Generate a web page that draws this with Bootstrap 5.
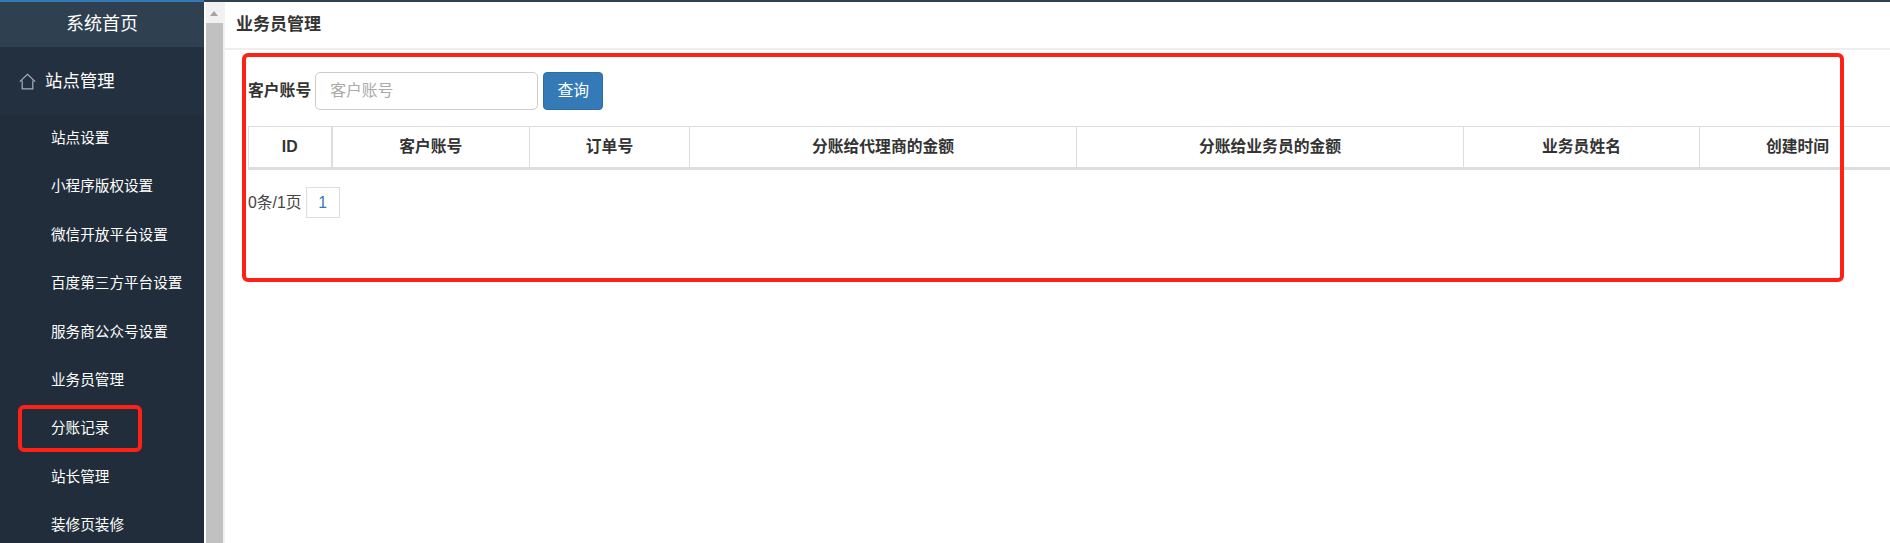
<!doctype html>
<html lang="zh">
<head>
<meta charset="utf-8">
<title>分账记录</title>
<link href="https://cdn.jsdelivr.net/npm/bootstrap@5.3.2/dist/css/bootstrap.min.css" rel="stylesheet">
<style>
  html, body { height: 543px; overflow: hidden; }
  body { font-family: "Liberation Sans", "Noto Sans CJK SC", sans-serif; color: #333; background: #fff; }
  .top-line { height: 2px; background: #2f4050; }
  .top-line span { display: block; width: 204px; height: 2px; background: #337ab7; }
  .page-wrap { height: 541px; }

  /* sidebar */
  .side-menu { width: 204px; background: #212d3a; overflow: hidden; flex: none; }
  .side-home { height: 45px; line-height: 45px; text-align: center; font-size: 18px; color: #fff; background: #2f4050; }
  .side-group { height: 67px; padding-left: 19px; padding-top: 2px; font-size: 17.4px; color: #fff; background: #233040; gap: 9px; }
  .side-group svg { width: 17px; height: 17px; }
  .side-list a { display: block; height: 48.4px; line-height: 48.4px; padding-left: 51px; font-size: 14.6px; color: #fff; text-decoration: none; white-space: nowrap; }

  /* scrollbar */
  .fake-scroll { width: 21px; flex: none; background: #f1f1f1; border-left: 2px solid #fff; border-right: 2px solid #f1f1f1; }
  .fake-scroll i { display: block; height: 21px; position: relative; }
  .fake-scroll i::before { content: ""; position: absolute; left: 4px; top: 9px; border: 4.5px solid transparent; border-top: 0; border-bottom: 5px solid #a3a3a3; }
  .fake-scroll b { display: block; height: 520px; background: #c1c1c1; }

  /* main */
  .main-pane { min-width: 0; flex: 1; overflow: hidden; }
  .pane-title { height: 48px; line-height: 46px; padding-left: 11px; font-size: 17px; font-weight: 700; border-bottom: 2px solid #eee; }
  .pane-body { padding: 22px 0 0 23px; width: 1671px; }
  .search-label { font-size: 15.8px; font-weight: 700; margin: 0 4px 0 0; white-space: nowrap; }
  .search-input { width: 223px; height: 38px; font-size: 15.8px; padding: 6px 14px; border: 1px solid #ccc; border-radius: 5px; color: #555; }
  .search-input::placeholder { color: #aaa; }
  .search-btn { height: 38px; width: 60px; margin-left: 5px; padding: 0; font-size: 15.8px; color: #fff; background: #337ab7; border: 1px solid #2e6da4; border-radius: 4px; }
  .record-table { width: 1648px; margin: 16px 0 0; table-layout: fixed; border-collapse: collapse; }
  .record-table th { height: 42px; padding: 0; font-size: 15.8px; font-weight: 700; text-align: center; color: #333; border: 1px solid #ddd; border-bottom: 3px solid #ddd; vertical-align: middle; }
  .record-table th.id-col { border-right-width: 2px; }
  .pager-row { margin-top: 17px; font-size: 15.8px; color: #444; }
  .pager-num { width: 34px; height: 31px; line-height: 29px; margin-left: 4px; text-align: center; color: #337ab7; border: 1px solid #ddd; }

  /* red markup drawn on top of the screenshot */
  .mark-box { position: absolute; border: 4px solid #ff2016; border-radius: 6px; pointer-events: none; }
  .mark-side { left: 18px; top: 405px; width: 124px; height: 47px; }
  .mark-main { left: 242px; top: 53px; width: 1602px; height: 229px; }
</style>
</head>
<body>
<div class="top-line"><span></span></div>
<div class="page-wrap d-flex">
  <div class="side-menu">
    <div class="side-home">系统首页</div>
    <div class="side-group d-flex align-items-center">
      <svg viewBox="0 0 17 17" fill="none" stroke="#a9afb6" stroke-width="1.2"><path d="M.8 8.6 8.5 1.4l7.7 7.2M3.2 7.4v8.4h10.6V7.4"/></svg>
      <span>站点管理</span>
    </div>
    <nav class="side-list">
      <a href="#">站点设置</a>
      <a href="#">小程序版权设置</a>
      <a href="#">微信开放平台设置</a>
      <a href="#">百度第三方平台设置</a>
      <a href="#">服务商公众号设置</a>
      <a href="#">业务员管理</a>
      <a href="#">分账记录</a>
      <a href="#">站长管理</a>
      <a href="#">装修页装修</a>
    </nav>
  </div>
  <div class="fake-scroll"><i></i><b></b></div>
  <div class="main-pane">
    <div class="pane-title">业务员管理</div>
    <div class="pane-body">
      <form class="d-flex align-items-center">
        <label class="search-label" for="account">客户账号</label>
        <input class="form-control search-input" id="account" type="text" placeholder="客户账号">
        <button class="btn search-btn" type="button">查询</button>
      </form>
      <table class="record-table">
        <thead>
          <tr>
            <th class="id-col" style="width:83px">ID</th>
            <th style="width:198px">客户账号</th>
            <th style="width:160px">订单号</th>
            <th style="width:387px">分账给代理商的金额</th>
            <th style="width:387px">分账给业务员的金额</th>
            <th style="width:236px">业务员姓名</th>
            <th>创建时间</th>
          </tr>
        </thead>
      </table>
      <div class="pager-row d-flex align-items-center">
        <span>0条/1页</span>
        <span class="pager-num">1</span>
      </div>
    </div>
  </div>
</div>
<div class="mark-box mark-side"></div>
<div class="mark-box mark-main"></div>
<script src="https://cdn.jsdelivr.net/npm/bootstrap@5.3.2/dist/js/bootstrap.bundle.min.js"></script>
</body>
</html>
